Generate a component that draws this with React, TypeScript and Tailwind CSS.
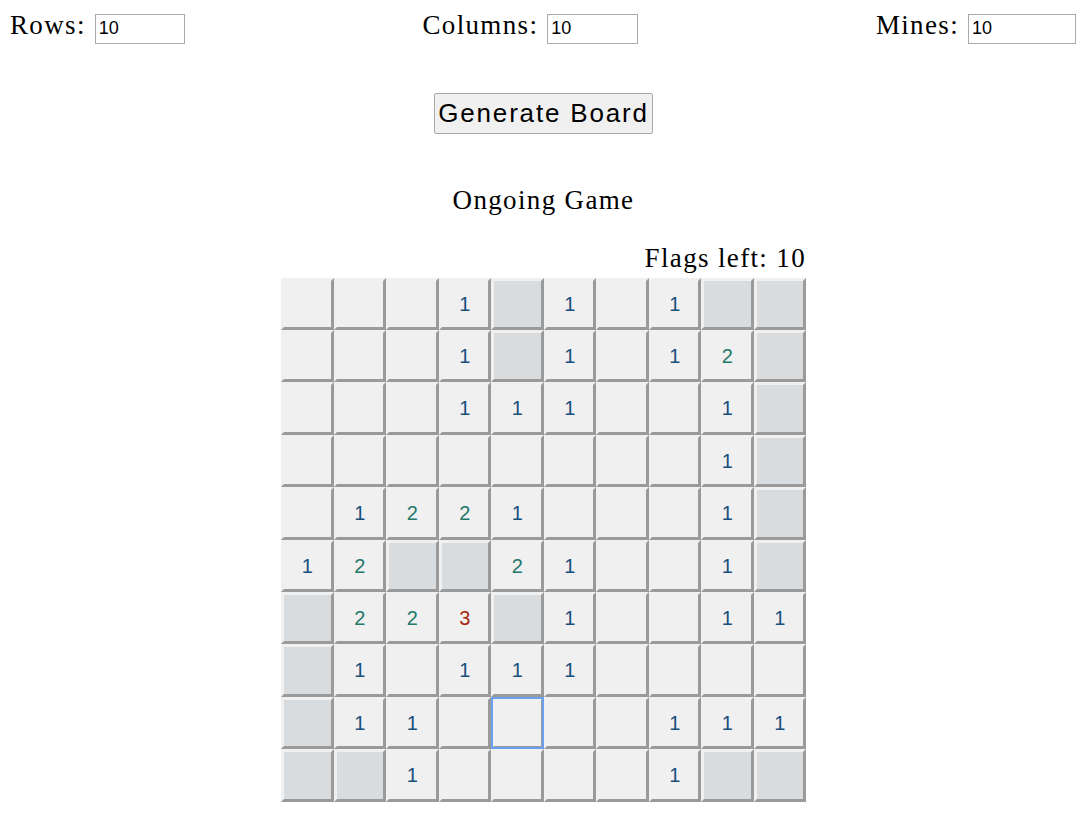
import { useState } from "react"

type Cell = number | "U" | null

// U = hidden, null = opened empty, number = neighbour count
const BOARD: Cell[][] = [
  [null, null, null, 1, "U", 1, null, 1, "U", "U"],
  [null, null, null, 1, "U", 1, null, 1, 2, "U"],
  [null, null, null, 1, 1, 1, null, null, 1, "U"],
  [null, null, null, null, null, null, null, null, 1, "U"],
  [null, 1, 2, 2, 1, null, null, null, 1, "U"],
  [1, 2, "U", "U", 2, 1, null, null, 1, "U"],
  ["U", 2, 2, 3, "U", 1, null, null, 1, 1],
  ["U", 1, null, 1, 1, 1, null, null, null, null],
  ["U", 1, 1, null, null, null, null, 1, 1, 1],
  ["U", "U", 1, null, null, null, null, 1, "U", "U"],
]

const numColor: Record<number, string> = {
  1: "text-[#164e7c]",
  2: "text-[#23786a]",
  3: "text-[#a4260f]",
}

function Field({ label, value, width }: { label: string; value: string; width: string }) {
  return (
    <label className="flex items-baseline gap-[9px]">
      <span className="font-['Liberation_Serif',serif] text-[27px] leading-[31px] tracking-[0.05em]">{label}</span>
      <input
        type="text"
        defaultValue={value}
        className={`${width} h-[30px] border border-[#a9a9a9] bg-white px-[3px] font-['Liberation_Sans',sans-serif] text-[18px] text-black outline-none`}
      />
    </label>
  )
}

export default function App() {
  const [focused] = useState<[number, number]>([8, 4])

  return (
    <div className="w-[1087px] bg-white text-black">
      <div className="flex items-baseline justify-between pl-[10px] pr-[11px] pt-[10px]">
        <Field label="Rows:" value="10" width="w-[90px]" />
        <Field label="Columns:" value="10" width="w-[91px]" />
        <Field label="Mines:" value="10" width="w-[108px]" />
      </div>

      <div className="mt-[49px] flex justify-center">
        <button className="h-[41px] w-[219px] rounded-[2px] border border-[#a9a9a9] bg-[#f0f0f0] font-['Liberation_Sans',sans-serif] text-[26px] tracking-[0.07em] text-black">
          Generate Board
        </button>
      </div>

      <div className="mx-auto mt-[51px] w-[525px] font-['Liberation_Serif',serif] text-[27px] leading-[31px] tracking-[0.05em]">
        <div className="text-center">Ongoing Game</div>
        <div className="mt-[27px] text-right">Flags left: 10</div>
      </div>

      <div className="mx-auto mt-[4px] grid h-[524px] w-[525px] grid-cols-10 grid-rows-10">
        {BOARD.map((row, r) =>
          row.map((cell, c) => {
            const hidden = cell === "U"
            const isFocus = focused[0] === r && focused[1] === c
            return (
              <div
                key={`${r}-${c}`}
                className={`flex items-center justify-center border-[3px] border-t-[#f0f0f0] border-l-[#f0f0f0] border-r-[#9a9a9a] border-b-[#9a9a9a] font-['Liberation_Sans',sans-serif] text-[20px] ${
                  hidden ? "bg-[#d9dcdf]" : "bg-[#f0f0f0]"
                } ${typeof cell === "number" ? numColor[cell] : ""} ${
                  isFocus ? "outline-2 -outline-offset-2 outline-[#6b9ff0]" : ""
                }`}
              >
                {typeof cell === "number" ? cell : ""}
              </div>
            )
          })
        )}
      </div>
    </div>
  )
}
